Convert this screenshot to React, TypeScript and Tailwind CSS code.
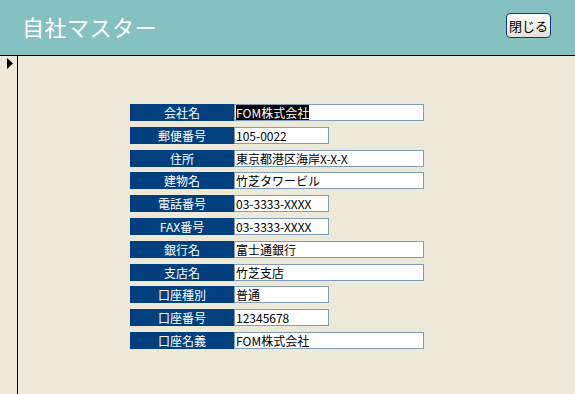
import React from 'react';

const rows = [
  { label: '会社名', value: 'FOM株式会社', wide: true, selected: true },
  { label: '郵便番号', value: '105-0022', wide: false },
  { label: '住所', value: '東京都港区海岸X-X-X', wide: true },
  { label: '建物名', value: '竹芝タワービル', wide: true },
  { label: '電話番号', value: '03-3333-XXXX', wide: false },
  { label: 'FAX番号', value: '03-3333-XXXX', wide: false },
  { label: '銀行名', value: '富士通銀行', wide: true },
  { label: '支店名', value: '竹芝支店', wide: true },
  { label: '口座種別', value: '普通', wide: false },
  { label: '口座番号', value: '12345678', wide: false },
  { label: '口座名義', value: 'FOM株式会社', wide: true },
];

const App: React.FC = () => {
  return (
    <div
      className="w-[575px] h-[394px] flex flex-col bg-[#ECE9D8] overflow-hidden"
      style={{ fontFamily: '"Noto Sans CJK JP", "Liberation Sans", sans-serif' }}
    >
      <div className="h-[56px] shrink-0 bg-[#85C1C1] border-b border-black flex items-start justify-between">
        <h1 className="text-[22px] leading-none text-white mt-[15px] ml-[22px] tracking-[0.5px]">自社マスター</h1>
        <button className="mt-[13px] mr-[24px] w-[45px] h-[25px] rounded-[4px] border border-[#0A3C78] bg-gradient-to-b from-white to-[#E3E1D6] text-[13px] leading-none text-black">
          閉じる
        </button>
      </div>

      <div className="flex flex-1">
        <div className="w-[18px] shrink-0 border-r border-black pt-[2px] pl-[7px]">
          <svg width="7" height="11" viewBox="0 0 7 11">
            <path d="M0 0 L6 5.5 L0 11 Z" fill="#000" />
          </svg>
        </div>

        <div className="flex flex-col gap-[5.8px] pt-[48px] pl-[112px]">
          {rows.map((row, i) => (
            <div key={i} className="flex h-[17px]">
              <div className="w-[104px] bg-[#023F7E] text-white text-[12px] leading-[17px] text-center">
                {row.label}
              </div>
              <div
                className={`${row.wide ? 'w-[190px]' : 'w-[95px]'} bg-white border border-[#7F9DB9] text-[12px] leading-[15px] text-black pl-[1px] whitespace-nowrap overflow-hidden`}
              >
                {row.selected ? <span className="bg-black text-white">{row.value}</span> : row.value}
              </div>
            </div>
          ))}
        </div>
      </div>
    </div>
  );
};

export default App;
